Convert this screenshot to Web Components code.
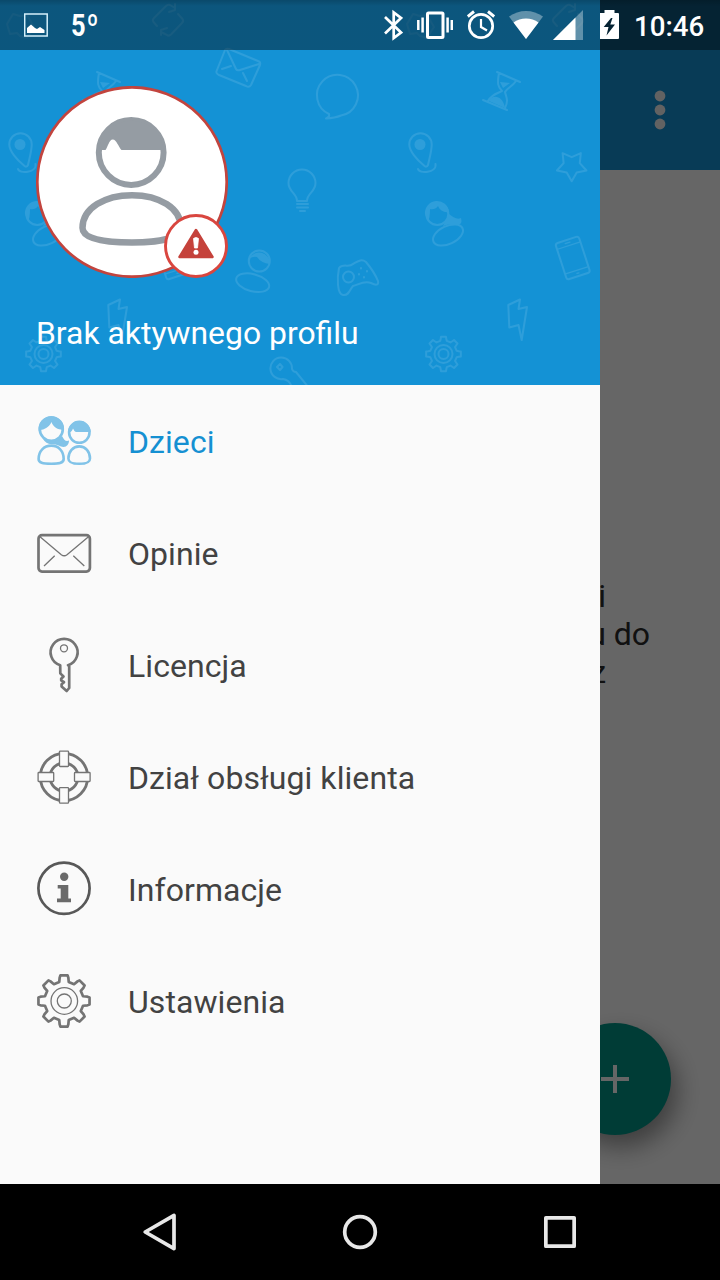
<!DOCTYPE html>
<html lang="pl">
<head>
<meta charset="utf-8">
<title>Profile</title>
<style>
  body {
    margin: 0;
    font-family: Roboto, "Noto Sans", sans-serif;
    overflow: hidden;
  }
</style>
</head>
<body>
<phone-screen>
  <app-page slot="page">
    <span style="padding-right: 114px">i</span>
    <span style="padding-right: 70px">u do</span>
    <span style="padding-right: 114px">z</span>
  </app-page>

  <nav-drawer slot="drawer">
    <profile-header slot="header">Brak aktywnego profilu</profile-header>
    <drawer-item icon="kids" active>Dzieci</drawer-item>
    <drawer-item icon="mail">Opinie</drawer-item>
    <drawer-item icon="key">Licencja</drawer-item>
    <drawer-item icon="help">Dział obsługi klienta</drawer-item>
    <drawer-item icon="info">Informacje</drawer-item>
    <drawer-item icon="settings">Ustawienia</drawer-item>
  </nav-drawer>

  <status-bar slot="status">
    <span slot="temp">5º</span>
    <span slot="time">10:46</span>
  </status-bar>

  <nav-buttons slot="nav"></nav-buttons>
</phone-screen>

<script>
// outline of an eight-tooth cog centred on cx, cy
function gearPath(cx, cy, outer, root) {
  const points = [];
  for (let i = 0; i < 8; i++) {
    const mid = i * 45 - 90;
    [[-14, root], [-10.5, outer - 2], [-8, outer], [8, outer], [10.5, outer - 2], [14, root]].forEach(([a, r]) => {
      const rad = (mid + a) * Math.PI / 180;
      points.push((cx + r * Math.cos(rad)).toFixed(2) + ' ' + (cy + r * Math.sin(rad)).toFixed(2));
    });
  }
  return 'M' + points.join('L') + 'Z';
}

function starPath(cx, cy, outer, inner) {
  const points = [];
  for (let i = 0; i < 10; i++) {
    const r = i % 2 ? inner : outer;
    const rad = (90 + i * 36) * Math.PI / 180;
    points.push((cx + r * Math.cos(rad)).toFixed(2) + ' ' + (cy + r * Math.sin(rad)).toFixed(2));
  }
  return 'M' + points.join('L') + 'Z';
}

// all drawn in a 56 x 56 box
const ICONS = {
  kids: `
    <g stroke="currentColor" stroke-width="2.6">
      <path fill="currentColor" stroke="none" d="M6 24C10 29 20 29 26 23C28 27 30 29 33 27.5C33 31 31 34 27.5 34C24 34 22 31 15 31C12 31 9 30 6 24Z"/>
      <circle cx="15.3" cy="16.2" r="11.500" fill="#fafafa"/>
      <path fill="currentColor" stroke="none" d="M2.700 18A12.800 12.800 0 1 1 27.900 18L25 16.500C20 16 17 13 15.400 9C14 13 10 16 5.500 16.800Z"/>
      <path fill="#fafafa" d="M2.600 46C2.600 38 8 32.600 15.300 32.600C22.500 32.600 27.700 38 27.700 46C27.700 49.800 24 50.800 15.300 50.800C6.500 50.800 2.600 49.800 2.600 46Z"/>
      <circle cx="43.300" cy="19.600" r="10.200" fill="#fafafa"/>
      <path fill="currentColor" stroke="none" d="M31.900 19A11.400 11.400 0 0 1 54.700 19L40 19C38.500 18.500 37.800 17 37 15.500C36.300 17 35.500 18.800 34.500 19Z"/>
      <path fill="#fafafa" d="M32.400 45.500C32.400 38.500 37 33.400 43.300 33.400C49.500 33.400 54 38.500 54 45.500C54 49.500 51 50.800 43.300 50.800C35.500 50.800 32.400 49.500 32.400 45.500Z"/>
    </g>`,
  mail: `
    <rect x="2.500" y="10.200" width="51.400" height="36.400" rx="3.500" stroke="currentColor" stroke-width="2.700"/>
    <path d="M4 11.700L25.300 29.700Q28.200 31.800 31 29.700L52.500 11.700M18.700 30.700L8 41M37.300 30.700L48.300 41" stroke="currentColor" stroke-width="1.300"/>`,
  key: `
    <path d="M24.200 28.200A13.500 13.500 0 1 1 32 28.200L33.200 28.700V51L30.700 54L25.600 49.500V47.300L28 45.200L25.200 43.300V41.800L27.500 39.500L24.300 36.400Z" stroke="currentColor" stroke-width="2.700" stroke-linejoin="round"/>
    <circle cx="28" cy="11.300" r="3.500" stroke="currentColor" stroke-width="1.300"/>`,
  help: `
    <circle cx="28" cy="28" r="23.700" stroke="currentColor" stroke-width="2.800"/>
    <circle cx="28" cy="28" r="14" stroke="currentColor" stroke-width="2.800"/>
    <g fill="#fafafa" stroke="currentColor" stroke-width="1.300">
      <rect x="23.500" y="2.100" width="9" height="15.400" rx=".7"/>
      <rect x="23.500" y="38.700" width="9" height="15.400" rx=".7"/>
      <rect x="2.100" y="23.500" width="15.600" height="9" rx=".7"/>
      <rect x="38.500" y="23.500" width="15.600" height="9" rx=".7"/>
    </g>`,
  info: `
    <circle cx="28" cy="27.300" r="25.600" stroke="#585858" stroke-width="2.700"/>
    <circle cx="28.200" cy="15.700" r="4.200" fill="#6a6a6a"/>
    <path d="M21.700 24H32.300V37.600H35V41.300H21V37.600H24.700V27.600H21.700Z" fill="#6a6a6a"/>`,
  settings: `
    <path d="${gearPath(28, 28, 25.8, 19.6)}" stroke="currentColor" stroke-width="2.700" stroke-linejoin="round"/>
    <circle cx="28.300" cy="28" r="13.300" stroke="currentColor" stroke-width="1.300"/>
    <circle cx="28.300" cy="28" r="7" stroke="currentColor" stroke-width="1.300"/>`
};

class PhoneScreen extends HTMLElement {
  constructor() {
    super();
    this.attachShadow({ mode: 'open' });
    this.shadowRoot.innerHTML = `
      <style>
        :host {
          display: grid;
          grid-template: 1184px 96px / 720px;
          width: 720px;
          height: 1280px;
          overflow: hidden;
        }

        slot::slotted(*) {
          grid-area: 1 / 1;
        }

        slot[name="status"]::slotted(*) {
          align-self: start;
        }

        slot[name="nav"]::slotted(*) {
          grid-area: 2 / 1;
        }
      </style>
      <slot name="page"></slot>
      <slot name="drawer"></slot>
      <slot name="status"></slot>
      <slot name="nav"></slot>
    `;
  }
}

class AppPage extends HTMLElement {
  constructor() {
    super();
    this.attachShadow({ mode: 'open' });
    this.shadowRoot.innerHTML = `
      <style>
        :host {
          display: grid;
          grid-template: 170px 1fr / 1fr;
          background: #fff;
          position: relative;
        }

        .bar {
          display: flex;
          align-items: center;
          justify-content: flex-end;
          padding: 50px 54px 0 0;
          background: #1593d6;
        }

        .body {
          display: flex;
          flex-direction: column;
          padding-top: 407px;
          font-size: 32px;
          line-height: 38px;
          color: #2c2c2c;
          text-align: right;
        }

        .fab {
          position: absolute;
          right: 49px;
          bottom: 49px;
          width: 112px;
          height: 112px;
          border-radius: 50%;
          background: #009688;
          box-shadow: 6px 12px 24px rgba(0, 0, 0, .4);
        }

        .scrim {
          position: absolute;
          inset: 0;
          background: rgba(0, 0, 0, .6);
        }
      </style>
      <div class="bar">
        <svg width="12" height="40" viewBox="0 0 12 40" fill="#f4f4f4">
          <circle cx="6" cy="6" r="5.400"/><circle cx="6" cy="20" r="5.400"/><circle cx="6" cy="34" r="5.400"/>
        </svg>
      </div>
      <div class="body"><slot></slot></div>
      <svg class="fab" viewBox="0 0 112 112"><path d="M42 56H70M56 42V70" stroke="#fff" stroke-width="4"/></svg>
      <div class="scrim"></div>
    `;
  }
}

class NavDrawer extends HTMLElement {
  constructor() {
    super();
    this.attachShadow({ mode: 'open' });
    this.shadowRoot.innerHTML = `
      <style>
        :host {
          display: flex;
          flex-direction: column;
          width: 600px;
          background: #fafafa;
          position: relative;
        }
      </style>
      <slot name="header"></slot>
      <slot></slot>
    `;
  }
}

class ProfileHeader extends HTMLElement {
  constructor() {
    super();
    this.attachShadow({ mode: 'open' });
    this.shadowRoot.innerHTML = `
      <style>
        :host {
          display: grid;
          height: 385px;
          background: #1492d5;
          color: #fff;
        }

        .doodles, .content {
          grid-area: 1 / 1;
        }

        .content {
          display: flex;
          flex-direction: column;
          gap: 36px;
          padding: 86px 36px 0;
          position: relative;
        }

        .name {
          font-size: 31.9px;
          line-height: 38px;
        }
      </style>
      <svg class="doodles" width="600" height="385" viewBox="0 0 600 385">
        <defs>
          <pattern id="doodles" width="400" height="385" patternUnits="userSpaceOnUse">
            <g fill="none" stroke="#fff" stroke-width="2" stroke-linejoin="round" stroke-linecap="round">
              <path d="M7 24L13 14L20 16L27 15L34 27L27 38L20 36L17 33L10 34Z" opacity=".6"/>
              <path d="M157 26L153.500 22Q152 20 154 18L166 6Q168 4 170 5L175 8M169 12L175 10V4M178 14L182.500 19Q184 21 182 23L171 34.500Q169 36.500 167 35L161 32M167 28L161 30V35" opacity=".8"/>
              <path d="M229 49L258 61Q261 62 260 65L251 85Q249 88 246 86L219 75Q215 73 217 70L225 50Q226 48 229 49ZM227 50L236 69Q237 71 240 70L259 64M222 69L231 66M243 73L247 81"/>
              <path d="M97 72L120 82M83 100L107 110M99 73C97 84 98 87 102 91C99 93 92 94 88 101M116 81C112 87 108 87 105 92C106 97 109 100 105 108"/>
              <path d="M328 114A20.500 20.500 0 1 1 340 115.500Q334 118 325 118.500Q329 117 328 114Z" transform="translate(1 0)"/>
              <path d="M24 165.500C17 160 9.300 151 9.300 144.500A11.200 11.200 0 1 1 31.700 144.500C31.700 151 29.500 158 28 165Q26.500 168 24 165.500ZM18 169C19 174 37 173 35.500 164"/>
              <path d="M297 201C297 193 288.500 192 288.500 183A13.500 13.500 0 0 1 315.500 183C315.500 192 307 193 307 201ZM297 204H308M297 207.500H308M300 211H305"/>
              <path d="${starPath(171.7, 165.7, 15.5, 8.5)}"/>
              <circle cx="37.300" cy="214" r="11"/>
              <ellipse cx="48" cy="235" rx="16" ry="9" transform="rotate(-25 48 235)"/>
              <g transform="rotate(-18 172.700 258)">
                <rect x="160.500" y="239" width="24.500" height="38" rx="2.500"/>
                <path d="M161 245H185M161 271H185M170 242H175M172 274H174" stroke-width="1.300"/>
              </g>
              <circle cx="259.300" cy="261" r="10.500"/>
              <ellipse cx="252.700" cy="282.700" rx="17" ry="8.500" transform="rotate(15 252.700 282.700)"/>
              <path d="M339 268C343 263 349 268 353 264C357 262 361 258 366 262C371 268 376 276 378 281C379 286 375 285 371 283C364 280 358 285 353 286C350 289 349 296 343 295C337 294 337 278 339 268Z"/>
              <circle cx="348.500" cy="277" r="5.500"/>
              <path d="M361 268V268.500M367 271V271.500M359 274V274.500M364 277V277.500"/>
              <path d="M108.300 305L120 299.500L118.500 309L127 307L121.700 340L118.500 325L109.300 327.500Z"/>
              <path d="${gearPath(43.5, 354, 17.5, 13.5)}"/>
              <circle cx="43.500" cy="354" r="9"/><circle cx="43.500" cy="354" r="5"/>
              <path d="M309 388L296 372Q293 372 292 369A10.800 10.800 0 1 0 283 379Q289 380 291 385M280 364L282.500 367L280 370L277 367Z"/>
            </g>
            <g fill="#fff">
              <circle cx="20" cy="144.500" r="5.500"/>
              <path d="M100 82L110 83L103 88ZM89 101C92 94 103 95 105 108Z"/>
              <path d="M25 214A12 12 0 0 1 49 212Q41 213 38 206Q35 210 30 209Q30 218 28 221ZM49 214C53 217 57 220 61 218Q63 225 57 225Q50 223 43 226Z"/>
              <path d="M249 259A11 11 0 0 1 270 264Q261 263 257 257Q253 256 249 259Z"/>
            </g>
          </pattern>
        </defs>
        <rect width="600" height="385" fill="url(#doodles)" opacity=".11"/>
      </svg>
      <div class="content">
        <svg width="192" height="192" viewBox="36 86 192 192" fill="none">
          <circle cx="132" cy="182" r="94.700" fill="#fff" stroke="#c2443e" stroke-width="2.700"/>
          <g stroke="#959ca3">
            <circle cx="131.200" cy="152.500" r="32.400" stroke-width="6"/>
            <path d="M99 150A32.400 32.400 0 0 1 163.500 150H121.500C118.500 147 116.500 139.500 112.800 139.500C109 139.500 108 147 105.500 150Z" fill="#959ca3" stroke="none"/>
            <path d="M82.500 228C82.500 208 105 195.200 132 195.200C159 195.200 181 208 181 228C181 238 160 242.500 132 242.500C104 242.500 82.500 239 82.500 228Z" stroke-width="6.500"/>
          </g>
          <circle cx="196" cy="246" r="30.500" fill="#fff" stroke="#d9463f" stroke-width="2.900"/>
          <path d="M196 230L212.500 257H179.500Z" fill="#c5423b" stroke="#c5423b" stroke-width="2.500" stroke-linejoin="round"/>
          <path d="M193.500 238.500Q196 236.500 198.500 238.500L197.500 248H194.500Z" fill="#fff" stroke="#fff" stroke-width=".8"/>
          <circle cx="196" cy="252.300" r="2.500" fill="#fff"/>
        </svg>
        <div class="name"><slot></slot></div>
      </div>
    `;
  }
}

class DrawerItem extends HTMLElement {
  constructor() {
    super();
    this.attachShadow({ mode: 'open' });
    this.shadowRoot.innerHTML = `
      <style>
        :host {
          display: flex;
          align-items: center;
          gap: 36px;
          height: 112px;
          padding: 0 36px;
          font-size: 32px;
          letter-spacing: .07px;
          color: #424242;
        }

        :host([active]) {
          color: #1590d2;
        }

        svg {
          color: #747474;
        }

        :host([active]) svg {
          color: #81c3e8;
        }

        span {
          line-height: 38px;
          padding-top: 2px;
        }
      </style>
      <svg width="56" height="56" viewBox="0 0 56 56" fill="none"></svg>
      <span><slot></slot></span>
    `;
  }

  connectedCallback() {
    this.shadowRoot.querySelector('svg').innerHTML = ICONS[this.getAttribute('icon')];
  }
}

class StatusBar extends HTMLElement {
  constructor() {
    super();
    this.attachShadow({ mode: 'open' });
    this.shadowRoot.innerHTML = `
      <style>
        :host {
          display: flex;
          align-items: center;
          height: 50px;
          padding: 0 16px 0 24px;
          background: linear-gradient(rgba(0, 0, 0, .5), rgba(0, 0, 0, .41) 6px);
          color: #fff;
          position: relative;
        }

        .temp {
          margin-left: 23px;
          font-size: 31px;
          font-weight: 700;
          letter-spacing: 1.5px;
          transform: scaleX(.82);
          transform-origin: left;
        }

        .icons {
          display: flex;
          gap: 14px;
          margin-left: auto;
        }

        .time {
          width: 70px;
          margin-left: 14.5px;
          padding-top: 2px;
          font-size: 27.7px;
          font-weight: 500;
          text-align: right;
        }
      </style>
      <svg width="24" height="50" viewBox="24 0 24 50" fill="none">
        <rect x="24.700" y="14" width="22.500" height="22" stroke="#d3f0fb" stroke-width="1.500"/>
        <path d="M27 33V28L31 24.500L35 28L37 29L40 27L44.500 30V33Z" fill="#fff"/>
      </svg>
      <span class="temp"><slot name="temp"></slot></span>
      <div class="icons">
        <svg width="19" height="50" viewBox="384 0 19 50" fill="none">
          <path d="M385 17L401 32.500L393.700 38V12.500L401 18L385 33.500" stroke="#fff" stroke-width="2.700"/>
        </svg>
        <svg width="36" height="50" viewBox="417 0 36 50" fill="none" stroke="#fff">
          <rect x="427.500" y="13" width="15.500" height="24.500" rx="1" stroke-width="3"/>
          <path d="M418.300 20V30M422.600 17.500V32.500M447.600 17.500V32.500M451.800 20V30" stroke-width="2.500"/>
        </svg>
        <svg width="28" height="50" viewBox="467 0 28 50" fill="none" stroke="#fff">
          <circle cx="481" cy="26" r="11.700" stroke-width="2.700"/>
          <path d="M481 19V27L487 30.500" stroke-width="2.200"/>
          <path d="M467.800 16.500L474 11.500M494.200 16.500L488 11.500" stroke-width="2.900"/>
        </svg>
        <svg width="34" height="50" viewBox="509 0 34 50" fill="#fff">
          <path d="M526 39L509 16.500C519 9 533 9 543 16.500Z" opacity=".35"/>
          <path d="M526 39L513.500 22.500C520.500 17 531.500 17 538.500 22.500Z"/>
        </svg>
        <svg width="30" height="50" viewBox="553 0 30 50" fill="#fff" style="margin-left: -4px">
          <path d="M553 40L583 10V40Z" opacity=".35"/>
          <path d="M553 40L575.500 17.500V40Z"/>
        </svg>
        <svg width="19.500" height="50" viewBox="600 0 19.500 50" style="margin-left: 3px">
          <path fill="#fff" fill-rule="evenodd" d="M600 13H604.500V10H614.500V13H618Q619 13 619 14V38Q619 39 618 39H600ZM611 18L603.700 27H608.500L606.500 35.500L615 24.500H610.300L612.500 18Z"/>
        </svg>
      </div>
      <span class="time"><slot name="time"></slot></span>
    `;
  }
}

class NavButtons extends HTMLElement {
  constructor() {
    super();
    this.attachShadow({ mode: 'open' });
    this.shadowRoot.innerHTML = `
      <style>
        :host {
          display: flex;
          align-items: center;
          justify-content: center;
          gap: 160px;
          background: #000;
        }

        svg {
          fill: none;
          stroke: #e8e8e8;
          stroke-width: 3.7;
          stroke-linejoin: round;
        }
      </style>
      <svg width="40" height="40" viewBox="0 0 40 40"><path d="M5.200 20L34 3.400V36.600Z"/></svg>
      <svg width="40" height="40" viewBox="0 0 40 40"><circle cx="20" cy="20" r="15.300"/></svg>
      <svg width="40" height="40" viewBox="0 0 40 40"><rect x="5.850" y="5.850" width="28.300" height="28.300"/></svg>
    `;
  }
}

customElements.define('phone-screen', PhoneScreen);
customElements.define('app-page', AppPage);
customElements.define('nav-drawer', NavDrawer);
customElements.define('profile-header', ProfileHeader);
customElements.define('drawer-item', DrawerItem);
customElements.define('status-bar', StatusBar);
customElements.define('nav-buttons', NavButtons);
</script>
</body>
</html>
